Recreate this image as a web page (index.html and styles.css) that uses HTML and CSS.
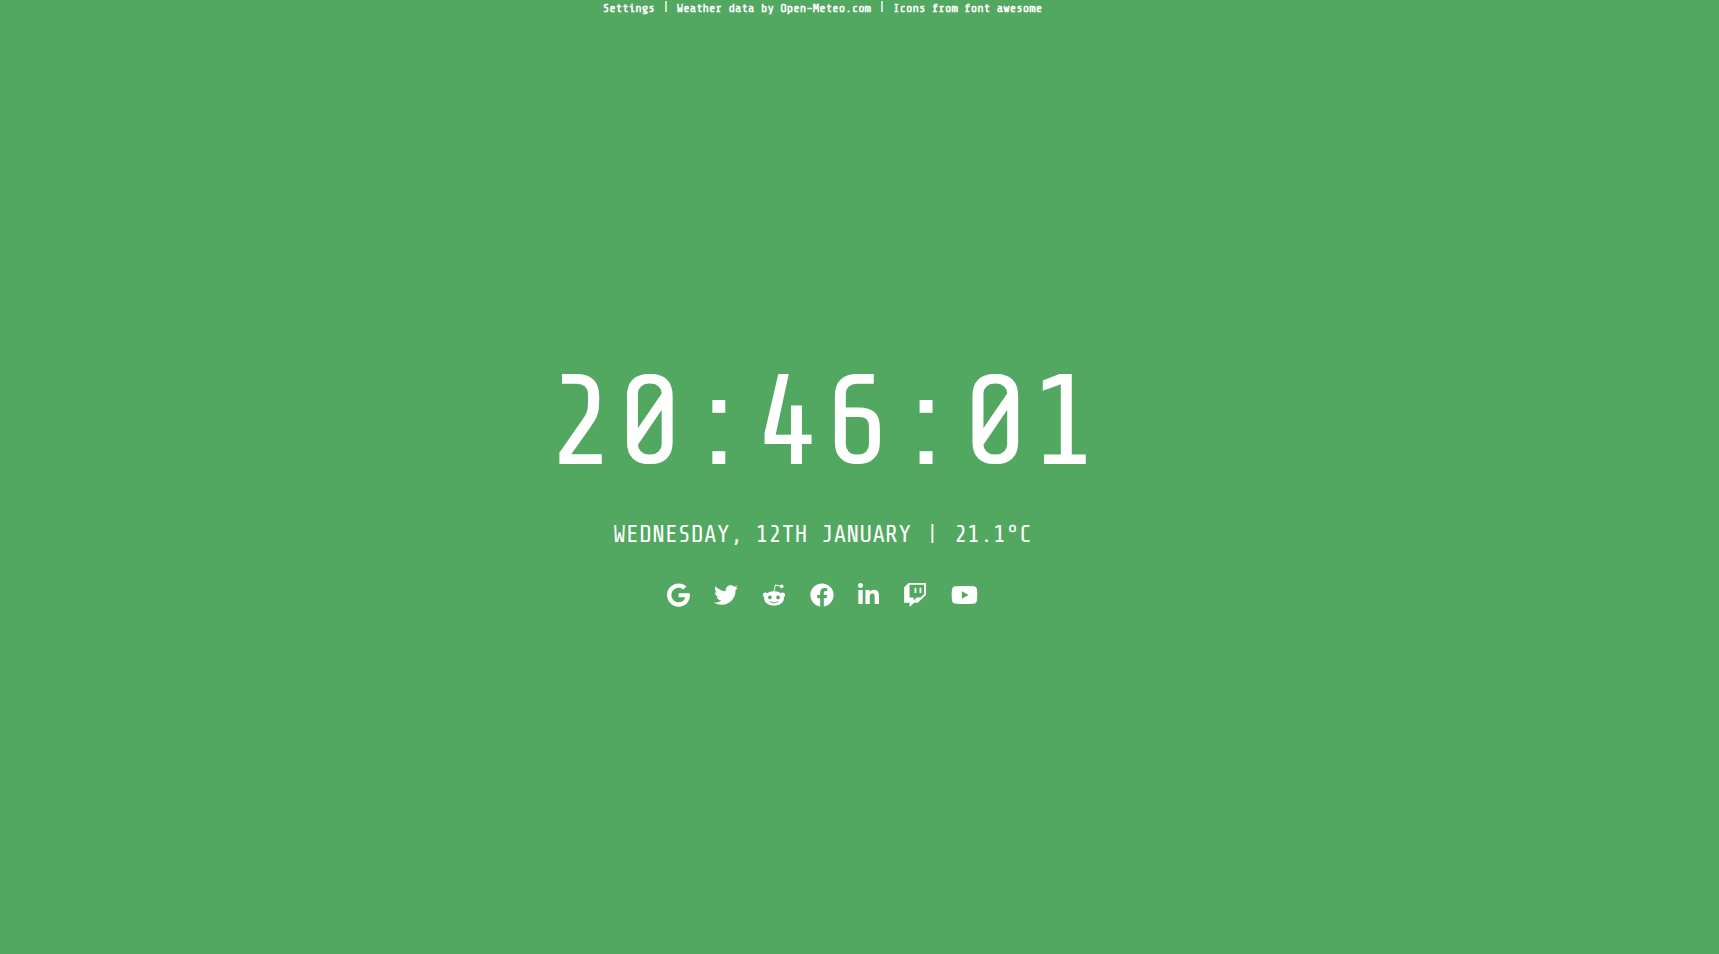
FILE: index.html
```html
<!DOCTYPE html>
<html lang="en">
<head>
<meta charset="utf-8">
<title>New Tab</title>
<link rel="stylesheet" href="styles.css">
</head>
<body>
<header class="topbar">
  <button class="topbar-item" type="button">Settings</button>
  <span class="topbar-divider"></span>
  <a class="topbar-item" href="https://open-meteo.com/">Weather data by Open-Meteo.com</a>
  <span class="topbar-divider"></span>
  <a class="topbar-item" href="https://fontawesome.com/">Icons from font awesome</a>
</header>
<main class="content">
  <h1 class="clock">20:46:01</h1>
  <div class="info">
    <span>Wednesday, 12th January</span>
    <span class="info-divider"></span>
    <span>21.1°C</span>
  </div>
  <nav class="links">
    <a href="https://www.google.com/" aria-label="Google"><svg class="icon" viewBox="0 0 488 512"><path d="M488 261.8C488 403.3 391.1 504 248 504 110.800 504 0 393.200 0 256S110.800 8 248 8c66.800 0 123 24.500 166.300 64.900l-67.500 64.900C258.500 52.600 94.300 116.600 94.300 256c0 86.500 69.100 156.600 153.700 156.600 98.200 0 135-70.400 140.800-106.900H248v-85.300h236.100c2.300 12.700 3.900 24.900 3.900 41.400z"/></svg></a>
    <a href="https://twitter.com/" aria-label="Twitter"><svg class="icon" viewBox="0 0 512 512"><path d="M459.370 151.716c.325 4.548.325 9.097.325 13.645 0 138.720-105.583 298.558-298.558 298.558-59.452 0-114.680-17.219-161.137-47.106 8.447.974 16.568 1.299 25.340 1.299 49.055 0 94.213-16.568 130.274-44.832-46.132-.975-84.792-31.188-98.112-72.772 6.498.974 12.995 1.624 19.818 1.624 9.421 0 18.843-1.300 27.614-3.573-48.081-9.747-84.143-51.980-84.143-102.985v-1.299c13.969 7.797 30.214 12.670 47.431 13.319-28.264-18.843-46.781-51.005-46.781-87.391 0-19.492 5.197-37.360 14.294-52.954 51.655 63.675 129.300 105.258 216.365 109.807-1.624-7.797-2.599-15.918-2.599-24.040 0-57.828 46.782-104.934 104.934-104.934 30.213 0 57.502 12.670 76.670 33.137 23.715-4.548 46.456-13.320 66.599-25.340-7.798 24.366-24.366 44.833-46.132 57.827 21.117-2.273 41.584-8.122 60.426-16.243-14.292 20.791-32.161 39.308-52.628 54.253z"/></svg></a>
    <a href="https://www.reddit.com/" aria-label="Reddit"><svg class="icon" viewBox="0 0 512 512"><path d="M440.3 203.5c-15 0-28.2 6.2-37.9 15.9-35.7-24.7-83.8-40.6-137.1-42.3L293 52.3l88.2 19.8c0 21.6 17.6 39.2 39.2 39.2 22 0 39.700-18.1 39.700-39.700s-17.600-39.700-39.700-39.700c-15.400 0-28.700 9.300-35.300 22l-97.400-21.600c-4.900-1.300-9.700 2.200-11 7.100L246.300 177c-52.900 2.200-100.500 18.100-136.300 42.800-9.700-10.100-23.400-16.300-38.400-16.300-55.600 0-73.800 74.600-22.900 100.100-1.800 7.900-2.600 16.300-2.600 24.700 0 83.800 94.400 151.700 210.300 151.700 116.400 0 210.800-67.900 210.800-151.700 0-8.400-.9-17.200-3.100-25.100 49.900-25.600 31.500-99.700-23.800-99.700zM129.400 308.900c0-22 17.600-39.700 39.700-39.700 21.600 0 39.200 17.600 39.200 39.700 0 21.600-17.600 39.200-39.200 39.200-22 .1-39.700-17.600-39.700-39.200zm214.300 93.500c-36.400 36.400-139.100 36.400-175.500 0-4-3.500-4-9.700 0-13.700 3.500-3.500 9.700-3.500 13.200 0 27.800 28.500 120 29 149 0 3.500-3.500 9.700-3.500 13.200 0 4.100 4 4.100 10.200.1 13.700zm-.8-54.200c-21.600 0-39.200-17.600-39.200-39.200 0-22 17.600-39.700 39.200-39.700 22 0 39.700 17.600 39.700 39.700-.1 21.500-17.700 39.200-39.700 39.200z"/></svg></a>
    <a href="https://www.facebook.com/" aria-label="Facebook"><svg class="icon" viewBox="0 0 512 512"><path d="M504 256C504 119 393 8 256 8S8 119 8 256c0 123.780 90.690 226.380 209.250 245V327.690h-63V256h63v-54.640c0-62.150 37-96.480 93.670-96.480 27.140 0 55.520 4.840 55.520 4.840v61h-31.280c-30.800 0-40.410 19.120-40.410 38.730V256h68.780l-11 71.690h-57.780V501C413.310 482.380 504 379.780 504 256z"/></svg></a>
    <a href="https://www.linkedin.com/" aria-label="LinkedIn"><svg class="icon" viewBox="0 0 448 512"><path d="M100.280 448H7.400V148.900h92.880zM53.790 108.100C24.090 108.100 0 83.500 0 53.800a53.790 53.790 0 0 1 107.580 0c0 29.700-24.100 54.300-53.790 54.300zM447.900 448h-92.680V302.400c0-34.700-.7-79.200-48.290-79.200-48.290 0-55.690 37.700-55.690 76.700V448h-92.780V148.900h89.080v40.800h1.300c12.400-23.500 42.690-48.300 87.880-48.300 94 0 111.280 61.900 111.280 142.300V448z"/></svg></a>
    <a href="https://www.twitch.tv/" aria-label="Twitch"><svg class="icon" viewBox="0 0 512 512"><path d="M391.170 103.470H352.540v109.700h38.630ZM285 103H246.370V212.750H285ZM120.830 0 24.310 91.420V420.580H140.140V512l96.530-91.420h77.250L487.690 256V0ZM449.070 237.750l-77.220 73.120H294.610l-67.600 64v-64H140.140V36.580H449.070Z"/></svg></a>
    <a href="https://www.youtube.com/" aria-label="YouTube"><svg class="icon" viewBox="0 0 576 512"><path d="M549.655 124.083c-6.281-23.650-24.787-42.276-48.284-48.597C458.781 64 288 64 288 64S117.220 64 74.629 75.486c-23.497 6.322-42.003 24.947-48.284 48.597-11.412 42.867-11.412 132.305-11.412 132.305s0 89.438 11.412 132.305c6.281 23.650 24.787 41.500 48.284 47.821C117.220 448 288 448 288 448s170.780 0 213.371-11.486c23.497-6.321 42.003-24.171 48.284-47.821 11.412-42.867 11.412-132.305 11.412-132.305s0-89.438-11.412-132.305zm-317.510 213.508V175.185l142.739 81.205-142.739 81.201z"/></svg></a>
  </nav>
</main>
</body>
</html>
```
FILE: styles.css
```css
* {
  box-sizing: border-box;
}

body {
  display: grid;
  min-height: 100vh;
  margin: 0;
  padding-right: 74px;
  background: #52a860;
  color: #fff;
  font-family: "Share Tech Mono", "DejaVu Sans Mono", monospace;
}

a {
  color: inherit;
  text-decoration: none;
}

.topbar,
.content {
  grid-area: 1 / 1;
}

.topbar {
  display: flex;
  align-items: flex-start;
  align-self: start;
  justify-content: center;
  gap: 10px;
  padding-top: 1px;
}

.topbar-item {
  padding: 0;
  border: 0;
  background: none;
  color: inherit;
  font: bold 12px/14px "Share Tech Mono", "DejaVu Sans Mono", monospace;
  cursor: pointer;
}

.topbar-divider {
  width: 2px;
  height: 11px;
  background: #cbe5d0;
}

.content {
  display: flex;
  flex-direction: column;
  align-items: center;
  align-self: center;
}

.clock {
  margin: 0;
  font-size: 128px;
  font-weight: normal;
  line-height: 152px;
}

.info {
  display: flex;
  align-items: flex-start;
  gap: 20px;
  margin: 20px 0 32px;
  font-size: 24px;
  line-height: 32px;
  text-transform: uppercase;
}

.info-divider {
  width: 3px;
  height: 19px;
  margin-top: 5px;
  border: solid #97e0c0;
  border-width: 0 1px;
  border-right-color: #b5b868;
  background: #fff;
}

.links {
  display: flex;
  gap: 24px;
}

.icon {
  display: block;
  height: 24px;
  fill: currentColor;
}
```
